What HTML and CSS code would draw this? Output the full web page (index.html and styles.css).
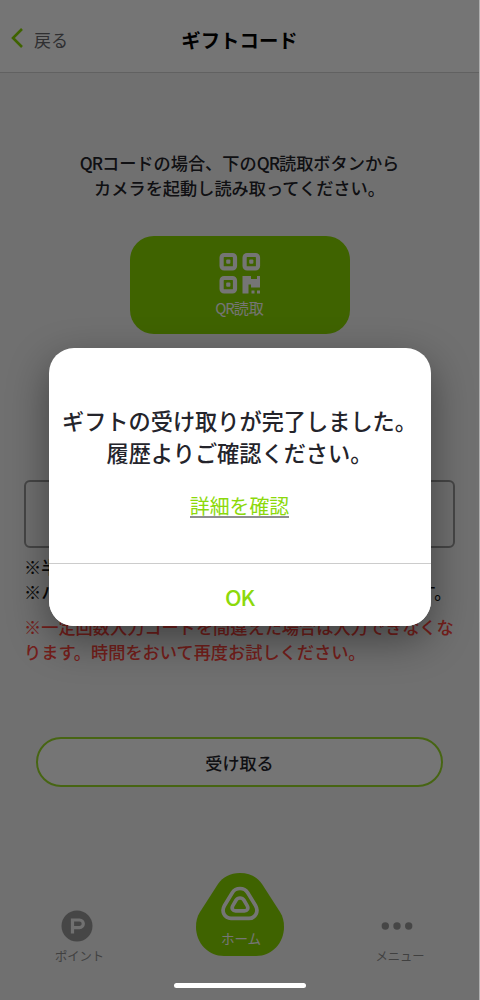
FILE: index.html
```html
<!DOCTYPE html>
<html lang="ja">
<head>
<meta charset="utf-8">
<title>ギフトコード</title>
<link rel="stylesheet" href="styles.css">
</head>
<body>
<div class="screen">
  <header class="header">
    <a class="back">
      <svg class="back-icon" width="12" height="20" viewBox="0 0 12 20"><path d="M11 1 2 10l9 9" fill="none" stroke="currentColor" stroke-width="2.600"/></svg>
      <span>戻る</span>
    </a>
    <h1 class="title">ギフトコード</h1>
  </header>
  <main class="content">
    <p class="lead"><span class="latin">QR</span>コードの場合、下の<span class="latin">QR</span>読取ボタンから<br>カメラを起動し読み取ってください。</p>
    <button class="scan">
      <svg width="42" height="42" viewBox="0 0 42 42" fill="none">
        <g stroke="currentColor" stroke-width="4.200">
          <rect x="2.600" y="3" width="13.400" height="13.400" rx="2.500"/>
          <rect x="25.600" y="3" width="13.400" height="13.400" rx="2.500"/>
          <rect x="2.600" y="26" width="13.400" height="13.400" rx="2.500"/>
        </g>
        <g fill="currentColor">
          <rect x="7.200" y="7.600" width="4.200" height="4.200" rx="1"/>
          <rect x="30.200" y="7.600" width="4.200" height="4.200" rx="1"/>
          <rect x="7.200" y="30.600" width="4.200" height="4.200" rx="1"/>
          <path d="M23.500 24H32V27H38V24H41V35.500H32V32.500H29.500V41.500H23.500Z"/>
          <rect x="32.500" y="38.500" width="3" height="3"/>
          <rect x="38" y="38.500" width="3" height="3"/>
        </g>
      </svg>
      <span class="scan-label"><span class="latin">QR</span>読取</span>
    </button>
    <div class="code-field"></div>
    <p class="note">※半角英数字で入力してください。<br>※ハイフン「－」を含む場合は省略して入力できます。</p>
    <p class="note warning">※一定回数入力コードを間違えた場合は入力できなくな<br>ります。時間をおいて再度お試しください。</p>
    <button class="receive">受け取る</button>
  </main>
  <nav class="tabs">
    <a class="tab tab-point">
      <svg width="32" height="32" viewBox="0 0 32 32"><circle cx="16" cy="16" r="15.500" fill="currentColor"/><path d="M11.500 23.500V10H18.500a3.800 3.800 0 0 1 0 7.600h-7" fill="none" stroke="#f4f4f4" stroke-width="3.200"/></svg>
      <span>ポイント</span>
    </a>
    <a class="tab-home">
      <svg width="88" height="83" viewBox="0 0 88 83">
        <path d="M44 0C54 0 61 4 66 11L84 39C87 44 88 48 88 54C88 70 76 83 60 83H28C12 83 0 70 0 54C0 48 1 44 4 39L22 11C27 4 34 0 44 0Z" fill="#89d700"/>
        <g fill="none" stroke="#fff" stroke-width="3.700" stroke-linejoin="round">
          <path d="M44 15.500C47.500 15.500 50 17 51.700 19.700L59.500 32.500C63 38.500 59.500 45.300 53 45.300H35C28.500 45.300 25 38.500 28.500 32.500L36.300 19.700C38 17 40.500 15.500 44 15.500Z"/>
          <path d="M44 25C46 25 47.200 26 48 27.300L51 32.400C53 35.700 51 37.900 48.500 37.900H39.500C37 37.900 35 35.700 37 32.400L40 27.300C40.800 26 42 25 44 25Z"/>
        </g>
      </svg>
      <span class="home-label">ホーム</span>
    </a>
    <a class="tab tab-menu">
      <svg width="32" height="32" viewBox="0 0 32 32" fill="currentColor"><circle cx="4.300" cy="16" r="3.700"/><circle cx="16" cy="16" r="3.700"/><circle cx="27.700" cy="16" r="3.700"/></svg>
      <span>メニュー</span>
    </a>
  </nav>
</div>
<div class="overlay">
  <section class="dialog" role="dialog">
    <div class="dialog-body">
      <p class="message">ギフトの受け取りが完了しました。<br>履歴よりご確認ください。</p>
      <a class="detail">詳細を確認</a>
    </div>
    <button class="ok">OK</button>
  </section>
  <div class="home-indicator"></div>
</div>
</body>
</html>
```
FILE: styles.css
```css
* { box-sizing: border-box; }
body {
  margin: 0;
  width: 480px;
  height: 1000px;
  overflow: hidden;
  position: relative;
  background: #b0b0b0;
  font-family: "Noto Sans CJK JP", sans-serif;
  color: #24242b;
}
h1, p { margin: 0; }
button { font: inherit; color: inherit; border: 0; padding: 0; }
svg { display: block; flex: none; }
.screen {
  width: 479px;
  height: 1000px;
  display: flex;
  flex-direction: column;
  background: #f4f4f4;
}
.header {
  height: 73px;
  display: grid;
  grid-template-columns: 120px 1fr 120px;
  align-items: center;
  padding-top: 7px;
  background: #fff;
  border-bottom: 1px solid #d4d4d4;
}
.back {
  display: flex;
  align-items: center;
  gap: 11px;
  padding-left: 11px;
  font-size: 17px;
  line-height: 24px;
  color: #66666b;
}
.back-icon { color: #89d700; margin-top: -3px; }
.title {
  text-align: center;
  font-size: 19.400px;
  line-height: 28px;
  color: #000;
}
.content {
  flex: 1;
  display: flex;
  flex-direction: column;
  align-items: center;
  padding: 78px 24px 0;
}
.lead, .note {
  font-size: 17.200px;
  line-height: 24.500px;
  font-weight: 500;
  white-space: nowrap;
}
.lead { text-align: center; }
.latin { letter-spacing: -1px; }
.scan {
  width: 220px;
  height: 98px;
  margin-top: 36px;
  padding-top: 16px;
  border-radius: 24px;
  background: #89d700;
  color: #fff;
  display: flex;
  flex-direction: column;
  align-items: center;
}
.scan-label { font-size: 15px; line-height: 22px; margin-top: 3px; }
.code-field {
  width: 431px;
  height: 68px;
  margin-top: 146px;
  border: 2px solid #989898;
  border-radius: 6px;
  flex: none;
}
.note { width: 431px; margin-top: 7px; color: #111; }
.note.warning { margin-top: 11px; color: #ff463e; }
.receive {
  width: 407px;
  height: 50px;
  margin-top: 73px;
  flex: none;
  border: 2px solid #9bdc2a;
  border-radius: 25px;
  background: #fff;
  font-size: 17.100px;
  font-weight: 500;
}
.tabs {
  height: 97px;
  display: flex;
  justify-content: space-between;
  padding: 0 54px;
  background: #f3f3f3;
  flex: none;
}
.tab {
  width: 50px;
  padding-top: 6.500px;
  display: flex;
  flex-direction: column;
  align-items: center;
  gap: 5px;
  color: #9a9a9a;
  font-size: 12.300px;
  line-height: 18px;
  white-space: nowrap;
}
.tab span { color: #8c8c8c; }
.tab-point { padding-left: 1px; }
.tab-point svg { margin-left: -5px; }
.tab-menu svg { margin-right: 6px; }
.tab-home {
  width: 88px;
  margin-top: -30px;
  display: grid;
  justify-items: center;
  align-content: start;
}
.tab-home > * { grid-area: 1 / 1; }
.home-label {
  align-self: end;
  padding-bottom: 9px;
  padding-left: 3px;
  font-size: 13.500px;
  line-height: 18px;
  color: #fff;
}
.overlay {
  position: absolute;
  inset: 0 1px 0 0;
  display: flex;
  flex-direction: column;
  align-items: center;
  padding-top: 348px;
  background: rgba(0, 0, 0, .54);
}
.dialog {
  width: 382px;
  height: 278px;
  display: flex;
  flex-direction: column;
  border-radius: 25px;
  background: #fff;
  box-shadow: 0 14px 40px rgba(0, 0, 0, .42);
  overflow: hidden;
  flex: none;
}
.dialog-body {
  flex: 1;
  display: flex;
  flex-direction: column;
  align-items: center;
  padding-top: 56px;
}
.message {
  font-size: 22.200px;
  line-height: 32px;
  font-weight: 500;
  text-align: center;
  white-space: nowrap;
}
.detail {
  margin-top: 24px;
  font-size: 19.900px;
  line-height: 28px;
  height: 26px;
  color: #8cd90b;
  border-bottom: 2px solid #8e8e8e;
}
.ok {
  height: 63px;
  padding-top: 1px;
  background: #fff;
  border-top: 1px solid #ccc;
  color: #8cd90b;
  font-size: 22px;
  letter-spacing: -1px;
  font-weight: 500;
}
.home-indicator {
  width: 132px;
  height: 5px;
  margin-top: 357px;
  border-radius: 3px;
  background: #fff;
}
```
